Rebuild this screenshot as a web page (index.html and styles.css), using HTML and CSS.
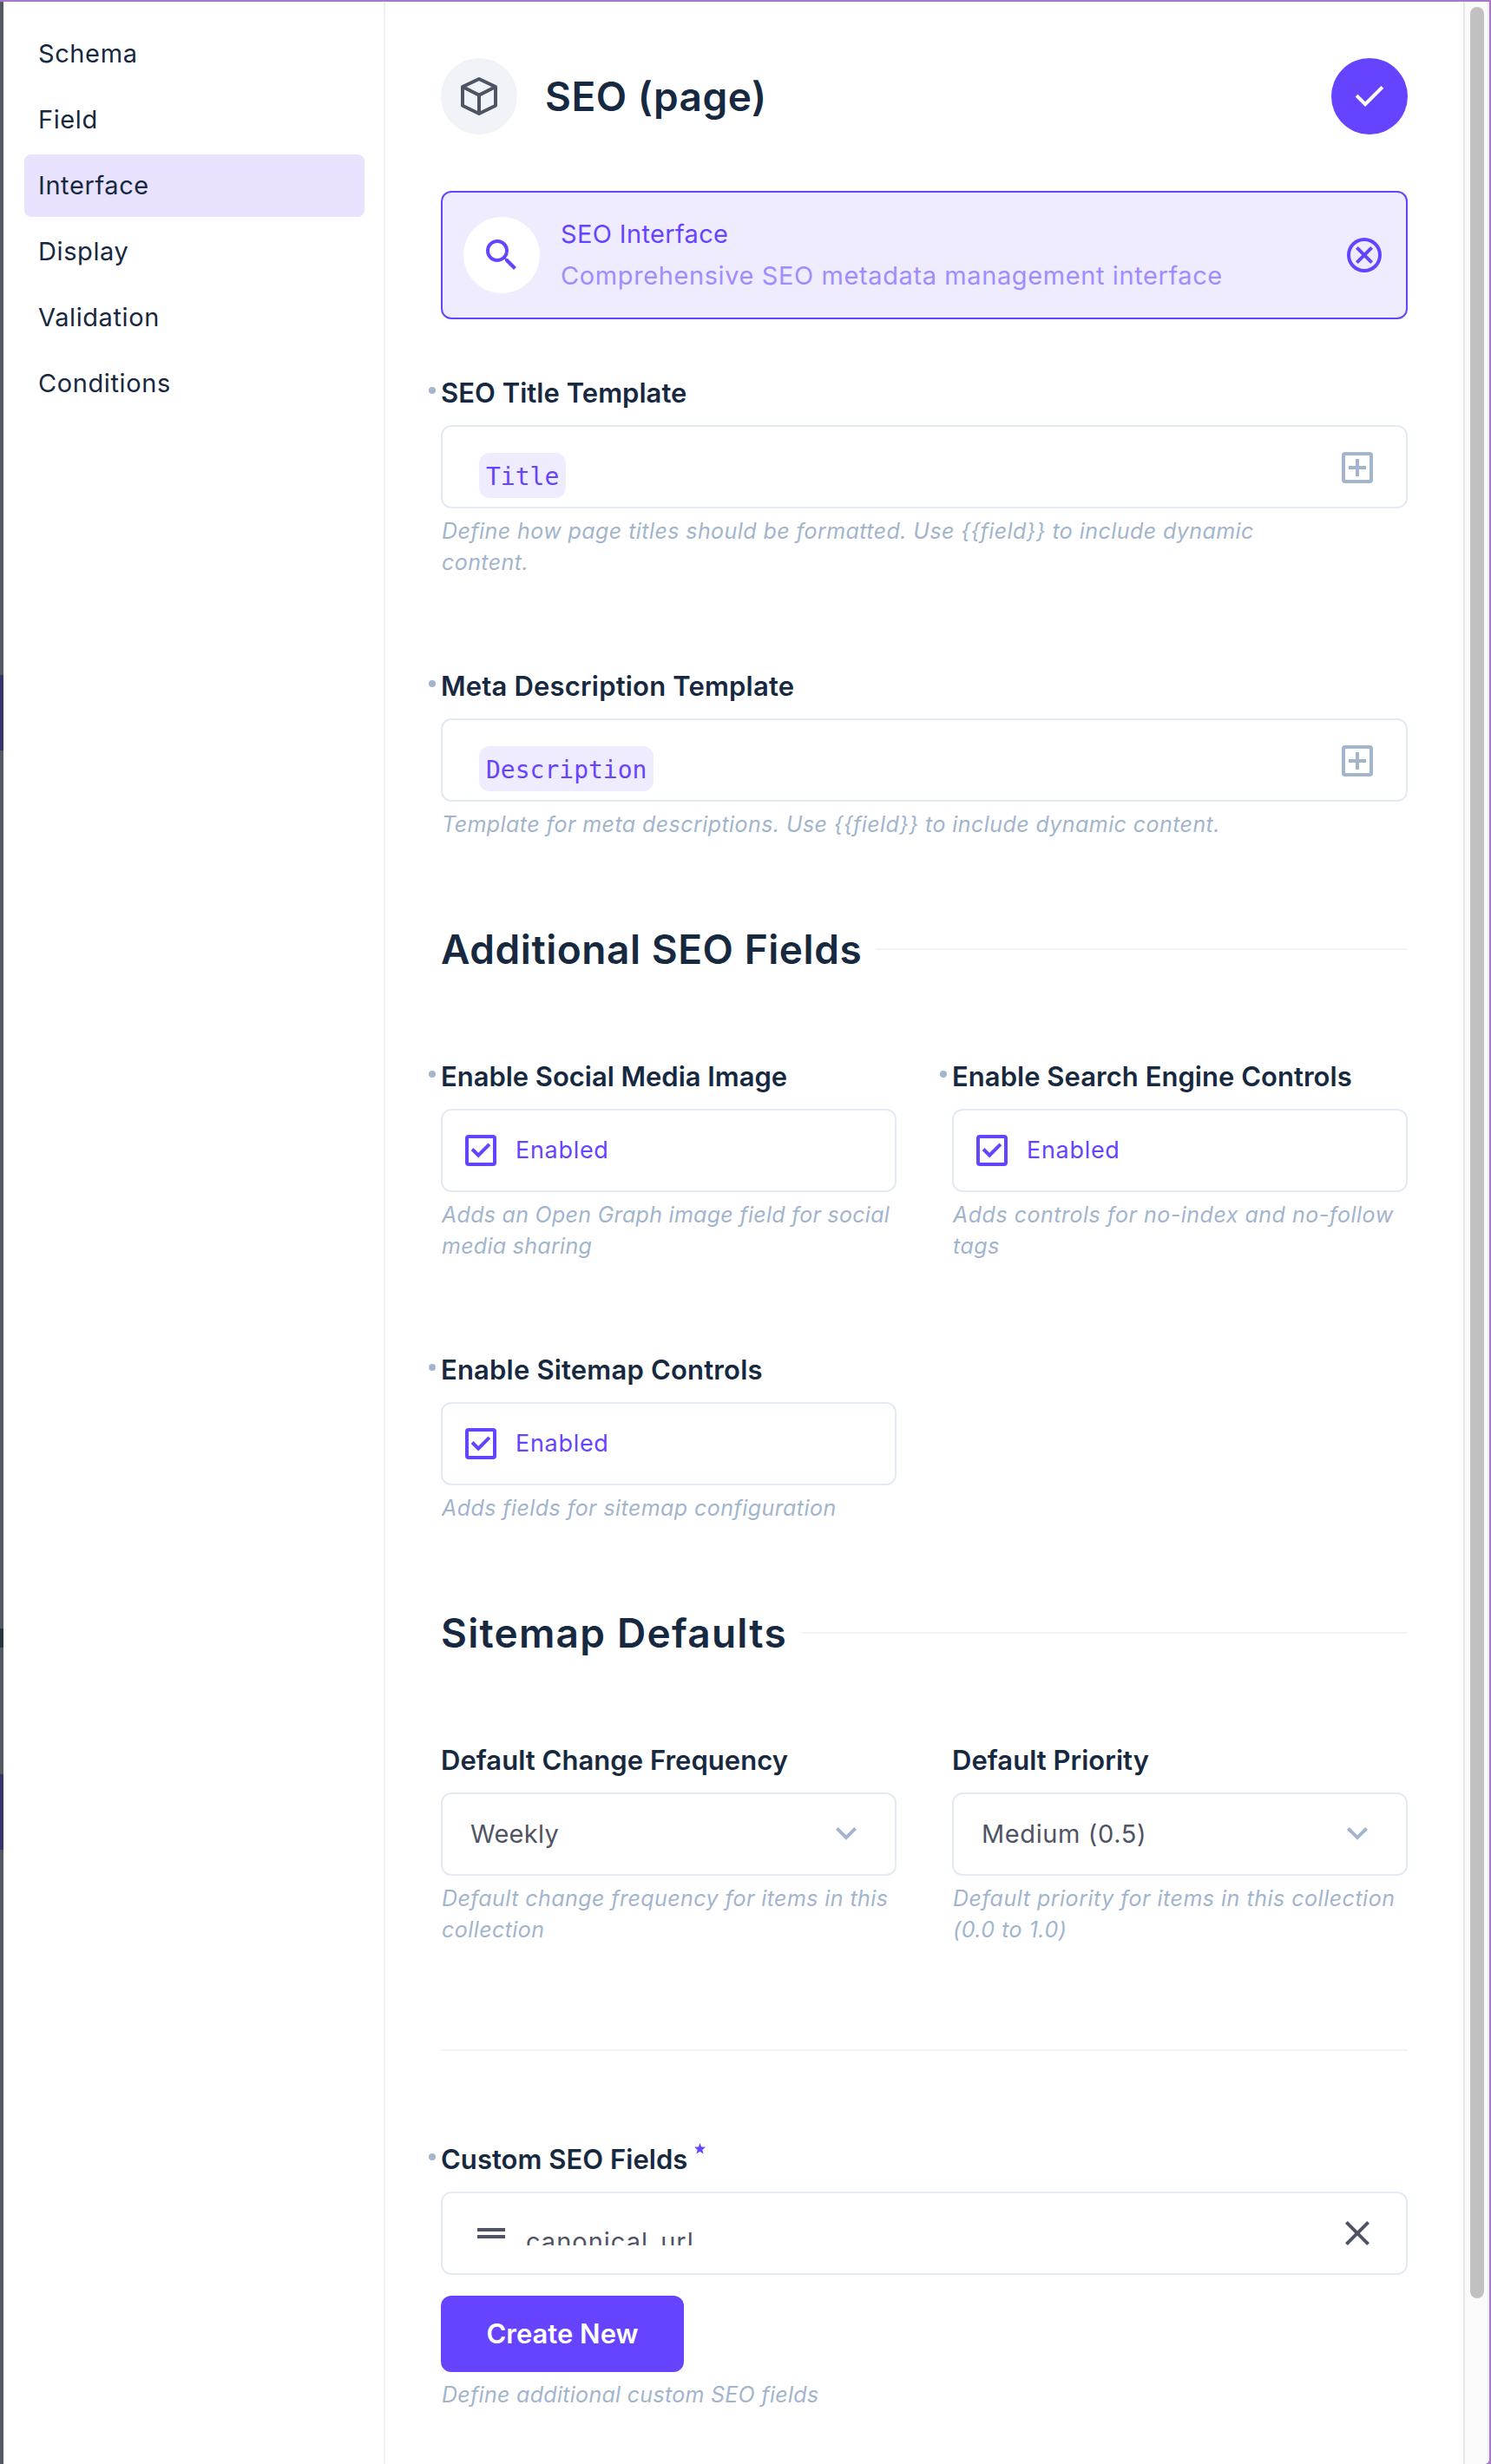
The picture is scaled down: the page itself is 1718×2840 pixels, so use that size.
FILE: index.html
```html
<!DOCTYPE html>
<html lang="en">
<head>
<meta charset="utf-8">
<title>SEO (page)</title>
<link rel="stylesheet" href="styles.css">
</head>
<body>
<svg class="defs" aria-hidden="true">
  <symbol id="i-check" viewBox="0 0 24 24"><path d="M9.55 18 3.85 12.3l1.425-1.425L9.55 15.15l9.175-9.175L20.15 7.4Z"/></symbol>
  <symbol id="i-search" viewBox="0 0 24 24"><path d="M15.5 14h-.79l-.28-.27A6.47 6.47 0 0 0 16 9.5 6.5 6.5 0 1 0 9.5 16c1.61 0 3.09-.59 4.23-1.57l.27.28v.79l5 4.99L20.49 19l-4.99-5zm-6 0C7.01 14 5 11.99 5 9.5S7.01 5 9.5 5 14 7.01 14 9.5 11.99 14 9.5 14z"/></symbol>
  <symbol id="i-cancel" viewBox="0 0 24 24"><path d="M8.4 17 12 13.4 15.6 17 17 15.6 13.4 12 17 8.4 15.6 7 12 10.6 8.4 7 7 8.4 10.6 12 7 15.6ZM12 22a10 10 0 1 1 0-20 10 10 0 0 1 0 20Zm0-2a8 8 0 1 0 0-16 8 8 0 0 0 0 16Z"/></symbol>
  <symbol id="i-add" viewBox="0 0 24 24"><path fill-rule="evenodd" d="M11 17h2v-4h4v-2h-4V7h-2v4H7v2h4ZM5 21a2 2 0 0 1-2-2V5a2 2 0 0 1 2-2h14a2 2 0 0 1 2 2v14a2 2 0 0 1-2 2ZM5 5v14h14V5Z"/></symbol>
  <symbol id="i-box" viewBox="0 0 24 24"><path fill-rule="evenodd" d="M10.6 16.2 17.65 9.15l-1.4-1.4L10.6 13.4 7.75 10.55l-1.4 1.4ZM5 21a2 2 0 0 1-2-2V5a2 2 0 0 1 2-2h14a2 2 0 0 1 2 2v14a2 2 0 0 1-2 2ZM5 5v14h14V5Z"/></symbol>
  <symbol id="i-down" viewBox="0 0 24 24"><path d="M12 15.375 6 9.375 7.4 7.975 12 12.575 16.6 7.975 18 9.375Z"/></symbol>
  <symbol id="i-close" viewBox="0 0 24 24"><path d="M6.4 19 5 17.6 10.6 12 5 6.4 6.4 5 12 10.6 17.6 5 19 6.4 13.4 12 19 17.6 17.6 19 12 13.4Z"/></symbol>
  <symbol id="i-drag" viewBox="0 0 24 24"><path d="M4 15v-2h16v2Zm0-4V9h16v2Z"/></symbol>
  <symbol id="i-cube" viewBox="0 0 24 24"><path fill="none" stroke="currentColor" stroke-width="2" stroke-linejoin="round" d="M12 2 21.5 6.5V17.4L12 22 2.5 17.4V6.5ZM2.5 6.5 12 11.3 21.5 6.5M12 11.3V22"/></symbol>
  <symbol id="i-star" viewBox="0 0 24 24"><path d="M12 0 15.2 8.2 24 8.8 17.2 14.4 19.4 23 12 18.2 4.6 23 6.8 14.4 0 8.8 8.8 8.2Z"/></symbol>
</svg>

<div class="frame">
  <div class="backdrop">
    <i class="strip-accent top"></i>
    <i class="strip-dark"></i>
    <i class="strip-accent"></i>
  </div>
  <div class="drawer">
    <nav class="sidebar">
      <a class="nav-item">Schema</a>
      <a class="nav-item">Field</a>
      <a class="nav-item active">Interface</a>
      <a class="nav-item">Display</a>
      <a class="nav-item">Validation</a>
      <a class="nav-item">Conditions</a>
    </nav>

    <main class="content">
      <header class="header">
        <span class="round round-subtle"><svg class="icon"><use href="#i-cube"/></svg></span>
        <h1 class="title">SEO (page)</h1>
        <button class="round round-primary"><svg class="icon"><use href="#i-check"/></svg></button>
      </header>

      <section class="card">
        <span class="round round-white"><svg class="icon"><use href="#i-search"/></svg></span>
        <div class="card-text">
          <div class="card-name">SEO Interface</div>
          <div class="card-info">Comprehensive SEO metadata management interface</div>
        </div>
        <svg class="icon"><use href="#i-cancel"/></svg>
      </section>

      <div class="field">
        <div class="label dot">SEO Title Template</div>
        <div class="control template"><span class="chip">Title</span><svg class="icon muted"><use href="#i-add"/></svg></div>
        <p class="note">Define how page titles should be formatted. Use {{field}} to include dynamic<br>content.</p>
      </div>

      <div class="field spaced">
        <div class="label dot loose">Meta Description Template</div>
        <div class="control template"><span class="chip">Description</span><svg class="icon muted"><use href="#i-add"/></svg></div>
        <p class="note">Template for meta descriptions. Use {{field}} to include dynamic content.</p>
      </div>

      <div class="divider"><h2 class="heading">Additional SEO Fields</h2></div>

      <div class="grid">
        <div class="field">
          <div class="label dot tight">Enable Social Media Image</div>
          <div class="control checkbox"><svg class="icon"><use href="#i-box"/></svg>Enabled</div>
          <p class="note snug">Adds an Open Graph image field for social<br>media sharing</p>
        </div>
        <div class="field">
          <div class="label dot">Enable Search Engine Controls</div>
          <div class="control checkbox"><svg class="icon"><use href="#i-box"/></svg>Enabled</div>
          <p class="note airy">Adds controls for no-index and no-follow<br>tags</p>
        </div>
        <div class="field">
          <div class="label dot loose">Enable Sitemap Controls</div>
          <div class="control checkbox"><svg class="icon"><use href="#i-box"/></svg>Enabled</div>
          <p class="note">Adds fields for sitemap configuration</p>
        </div>
      </div>

      <div class="divider"><h2 class="heading wide">Sitemap Defaults</h2></div>

      <div class="grid">
        <div class="field">
          <div class="label">Default Change Frequency</div>
          <div class="control select"><span class="snug-value">Weekly</span><svg class="icon muted"><use href="#i-down"/></svg></div>
          <p class="note">Default change frequency for items in this<br>collection</p>
        </div>
        <div class="field">
          <div class="label">Default Priority</div>
          <div class="control select"><span>Medium (0.5)</span><svg class="icon muted"><use href="#i-down"/></svg></div>
          <p class="note airy">Default priority for items in this collection<br>(0.0 to 1.0)</p>
        </div>
      </div>

      <hr class="rule">

      <div class="field">
        <div class="label dot">Custom SEO Fields<svg class="star"><use href="#i-star"/></svg></div>
        <div class="control row"><svg class="icon"><use href="#i-drag"/></svg><span class="row-text">canonical_url</span><svg class="icon"><use href="#i-close"/></svg></div>
        <button class="create">Create New</button>
        <p class="note snug">Define additional custom SEO fields</p>
      </div>
    </main>

    <div class="track"><div class="thumb"></div></div>
  </div>
</div>
</body>
</html>
```
FILE: styles.css
```css
* { box-sizing: border-box; margin: 0; padding: 0; }

body {
  background: #a678c9;
  color: #172940;
  font: 400 29px/48px Inter, "Liberation Sans", sans-serif;
  letter-spacing: 0.6px;
}

button { border: 0; font: inherit; color: inherit; }
.defs { display: none; }

.frame { display: flex; height: 2840px; padding: 2px 2px 0 0; overflow: hidden; }

.backdrop {
  display: flex;
  flex-direction: column;
  width: 4px;
  padding-top: 776px;
  background: #535b60;
}
.strip-accent { height: 87px; background: #36336b; }
.strip-dark { height: 22px; margin: 1012px 0 146px; background: #26343c; }

.drawer {
  display: flex;
  flex: 1;
  background: #fff;
  border-bottom-right-radius: 6px;
  overflow: hidden;
}

.sidebar {
  display: flex;
  flex-direction: column;
  gap: 4px;
  width: 440px;
  padding: 24px 22px 0 24px;
  border-right: 2px solid #f0f1f4;
}
.nav-item { height: 72px; padding-left: 16px; line-height: 72px; border-radius: 8px; }
.nav-item.active { background: #e8e2ff; }

.content { flex: 1; padding: 65px 64px 0; white-space: nowrap; }

.header { display: flex; align-items: center; gap: 32px; }
.title { flex: 1; font-size: 46px; font-weight: 600; line-height: 56px; letter-spacing: 0.5px; }

.round {
  display: flex;
  align-items: center;
  justify-content: center;
  width: 88px;
  height: 88px;
  border-radius: 50%;
}
.round-subtle { background: #f0f4f9; color: #4f5464; }
.round-primary { background: #6644ff; color: #fff; }
.round-white { background: #fff; }

.icon { flex: none; width: 48px; height: 48px; fill: currentColor; }
.muted { color: #a2b5cd; }

.card {
  display: flex;
  align-items: center;
  gap: 24px;
  height: 148px;
  margin: 65px 0 64px;
  padding: 0 24px;
  border: 2px solid #6644ff;
  border-radius: 12px;
  background: #f0ecff;
  color: #6644ff;
}
.card-text { flex: 1; }
.card-name { letter-spacing: 0.35px; }
.card-info { color: #a08bff; }

.spaced { margin-top: 104px; }

.label {
  display: flex;
  height: 42px;
  margin-bottom: 16px;
  font-size: 31px;
  font-weight: 600;
  line-height: 42px;
  letter-spacing: 0.03px;
}
.label.loose { letter-spacing: 0.18px; }
.label.tight { letter-spacing: -0.04px; }
.dot { position: relative; }
.dot::before {
  content: "";
  position: absolute;
  left: -14px;
  top: 14px;
  width: 8px;
  height: 8px;
  border-radius: 50%;
  background: #a2b5cd;
}

.star { width: 13px; height: 13px; margin: 2px 0 0 8px; fill: #6644ff; }

.control {
  display: flex;
  align-items: center;
  height: 96px;
  border: 2px solid #e4eaf3;
  border-radius: 12px;
}

.template { justify-content: space-between; padding: 0 32px 0 42px; }
.template .icon { margin-top: 2px; }
.chip {
  height: 52px;
  margin-top: 20px;
  padding: 3px 8px 0;
  border-radius: 12px;
  background: #f0ecff;
  color: #6644ff;
  font: 28px/50px "DejaVu Sans Mono", monospace;
  letter-spacing: 0;
}

.checkbox {
  gap: 16px;
  padding-left: 20px;
  color: #6644ff;
  font-size: 27px;
  letter-spacing: 0.7px;
}

.select { justify-content: space-between; padding: 0 32px; color: #4f5464; }
.snug-value { letter-spacing: 0.3px; }

.row { padding: 0 32px; color: #4f5464; }
.row-text {
  flex: 1;
  height: 28px;
  margin-left: 16px;
  line-height: 47px;
  letter-spacing: 1px;
  overflow: hidden;
}

.note {
  margin-top: 8px;
  padding-left: 1px;
  color: #a2b5cd;
  font-size: 25px;
  font-style: italic;
  line-height: 36px;
  letter-spacing: 0.43px;
}
.note.snug { letter-spacing: 0.29px; }
.note.airy { letter-spacing: 0.51px; }

.divider { display: flex; align-items: center; gap: 16px; margin: 98px 0; }
.divider::after { content: ""; flex: 1; height: 2px; background: #f0f4f9; }
.heading { font-size: 46px; font-weight: 600; line-height: 56px; letter-spacing: 0.55px; }
.heading.wide { letter-spacing: 1.25px; }

.grid { display: grid; grid-template-columns: 1fr 1fr; gap: 104px 64px; }

.rule { height: 2px; margin: 120px 0 104px; border: 0; background: #f0f4f9; }

.create {
  display: block;
  width: 280px;
  height: 88px;
  margin-top: 24px;
  border-radius: 12px;
  background: #6644ff;
  color: #fff;
  font-size: 31px;
  font-weight: 600;
  letter-spacing: 0;
}

.track {
  width: 30px;
  padding: 6px 0 0 6px;
  border-left: 2px solid #e8e8e8;
  border-right: 2px solid #ededed;
  background: #fafafa;
}
.thumb { width: 16px; height: 2641px; border-radius: 8px; background: #c1c1c1; }
```
